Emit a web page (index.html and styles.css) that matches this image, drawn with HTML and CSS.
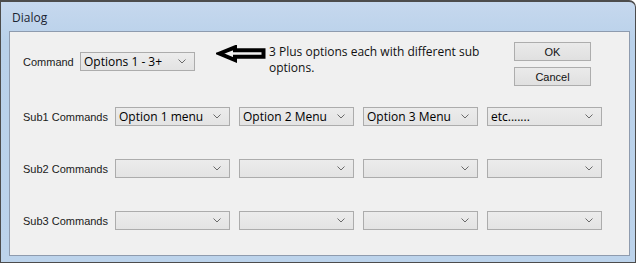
FILE: index.html
```html
<!DOCTYPE html>
<html>
<head>
<meta charset="utf-8">
<link rel="stylesheet" href="styles.css">
</head>
<body>
<div class="window">
  <div class="titlebar">Dialog</div>
  <div class="client">
    <div class="top">
      <div class="cmd">
        <span class="label cmd-label">Command</span>
        <div class="combo cmd-combo"><span class="val">Options 1 - 3+</span><svg class="chev" width="8" height="5" viewBox="0 0 8 5"><path d="M0.5 0.5 L4 4 L7.5 0.5" fill="none" stroke="#6a6a6a" stroke-width="1"/></svg></div>
      </div>
      <svg class="arrow" width="50" height="18" viewBox="0 0 50 18">
        <polygon points="3.5,8.5 19,2.3 19,5.2 47.5,5.2 47.5,11.8 19,11.8 19,15" fill="#f0f0f0" stroke="#000" stroke-width="4" stroke-linejoin="miter"/>
      </svg>
      <div class="note">3 Plus options each with different sub<br>options.</div>
      <div class="buttons">
        <button class="btn">OK</button>
        <button class="btn">Cancel</button>
      </div>
    </div>
    <div class="subs">
      <span class="label">Sub1 Commands</span>
      <div class="combo"><span class="val">Option 1 menu</span><svg class="chev" width="8" height="5" viewBox="0 0 8 5"><path d="M0.5 0.5 L4 4 L7.5 0.5" fill="none" stroke="#6a6a6a" stroke-width="1"/></svg></div>
      <div class="combo"><span class="val">Option 2 Menu</span><svg class="chev" width="8" height="5" viewBox="0 0 8 5"><path d="M0.5 0.5 L4 4 L7.5 0.5" fill="none" stroke="#6a6a6a" stroke-width="1"/></svg></div>
      <div class="combo"><span class="val">Option 3 Menu</span><svg class="chev" width="8" height="5" viewBox="0 0 8 5"><path d="M0.5 0.5 L4 4 L7.5 0.5" fill="none" stroke="#6a6a6a" stroke-width="1"/></svg></div>
      <div class="combo"><span class="val">etc.......</span><svg class="chev" width="8" height="5" viewBox="0 0 8 5"><path d="M0.5 0.5 L4 4 L7.5 0.5" fill="none" stroke="#6a6a6a" stroke-width="1"/></svg></div>

      <span class="label">Sub2 Commands</span>
      <div class="combo"><span class="val"></span><svg class="chev" width="8" height="5" viewBox="0 0 8 5"><path d="M0.5 0.5 L4 4 L7.5 0.5" fill="none" stroke="#6a6a6a" stroke-width="1"/></svg></div>
      <div class="combo"><span class="val"></span><svg class="chev" width="8" height="5" viewBox="0 0 8 5"><path d="M0.5 0.5 L4 4 L7.5 0.5" fill="none" stroke="#6a6a6a" stroke-width="1"/></svg></div>
      <div class="combo"><span class="val"></span><svg class="chev" width="8" height="5" viewBox="0 0 8 5"><path d="M0.5 0.5 L4 4 L7.5 0.5" fill="none" stroke="#6a6a6a" stroke-width="1"/></svg></div>
      <div class="combo"><span class="val"></span><svg class="chev" width="8" height="5" viewBox="0 0 8 5"><path d="M0.5 0.5 L4 4 L7.5 0.5" fill="none" stroke="#6a6a6a" stroke-width="1"/></svg></div>

      <span class="label">Sub3 Commands</span>
      <div class="combo"><span class="val"></span><svg class="chev" width="8" height="5" viewBox="0 0 8 5"><path d="M0.5 0.5 L4 4 L7.5 0.5" fill="none" stroke="#6a6a6a" stroke-width="1"/></svg></div>
      <div class="combo"><span class="val"></span><svg class="chev" width="8" height="5" viewBox="0 0 8 5"><path d="M0.5 0.5 L4 4 L7.5 0.5" fill="none" stroke="#6a6a6a" stroke-width="1"/></svg></div>
      <div class="combo"><span class="val"></span><svg class="chev" width="8" height="5" viewBox="0 0 8 5"><path d="M0.5 0.5 L4 4 L7.5 0.5" fill="none" stroke="#6a6a6a" stroke-width="1"/></svg></div>
      <div class="combo"><span class="val"></span><svg class="chev" width="8" height="5" viewBox="0 0 8 5"><path d="M0.5 0.5 L4 4 L7.5 0.5" fill="none" stroke="#6a6a6a" stroke-width="1"/></svg></div>
    </div>
  </div>
</div>
</body>
</html>
```
FILE: styles.css
```css
* { box-sizing: border-box; }
html, body { margin: 0; padding: 0; background: #ffffff; }
body { width: 640px; height: 264px; overflow: hidden; }

.window {
  width: 636px;
  height: 263px;
  border: 1px solid #4c4c4c;
  border-top-width: 2px;
  border-radius: 0 7px 0 0;
  background: linear-gradient(to bottom, #c6d8ee 0px, #b9d1ea 40px, #bcd3eb 100%);
  padding: 0 5px 6px 8px;
  display: flex;
  flex-direction: column;
}

.titlebar {
  height: 29px;
  padding: 8px 0 0 3px;
  font-family: "Open Sans", "Noto Sans", sans-serif;
  font-size: 12px;
  line-height: 16px;
  color: #1b2433;
}

.client {
  flex: 1;
  border: 1px solid #8e9bae;
  background: #f0f0f0;
  font-family: "Liberation Sans", Arial, sans-serif;
  font-size: 11px;
  color: #1a1a1a;
}

.top {
  display: flex;
  align-items: flex-start;
  padding: 0 38px 0 13px;
  height: 75px;
}

.cmd {
  display: flex;
  align-items: center;
  margin-top: 20px;
}
.cmd-label { width: 57px; }

.label { white-space: nowrap; }

.combo {
  width: 115px;
  height: 19px;
  border: 1px solid #acacac;
  background: linear-gradient(to bottom, #ececec, #e3e3e3);
  display: flex;
  align-items: center;
  justify-content: space-between;
  padding: 0 8px 0 3px;
  font-family: "Open Sans", "Noto Sans", sans-serif;
  font-size: 12px;
  color: #000;
  white-space: nowrap;
}
.chev { flex: none; }

.arrow { margin: 13px 0 0 21px; flex: none; }

.note {
  margin: 12px 0 0 3px;
  font-family: "Open Sans", "Noto Sans", sans-serif;
  font-size: 12px;
  line-height: 16px;
  color: #111;
}

.buttons {
  margin: 10px 0 0 auto;
  display: flex;
  flex-direction: column;
  gap: 6px;
}
.btn {
  width: 77px;
  height: 19px;
  border: 1px solid #adadad;
  background: linear-gradient(to bottom, #eaeaea, #e0e0e0);
  font-family: "Liberation Sans", Arial, sans-serif;
  font-size: 11px;
  color: #111;
  padding: 0;
}

.subs {
  display: grid;
  grid-template-columns: 83px repeat(4, 115px);
  grid-auto-rows: 19px;
  column-gap: 9px;
  row-gap: 33px;
  align-items: center;
  padding-left: 13px;
}
```
